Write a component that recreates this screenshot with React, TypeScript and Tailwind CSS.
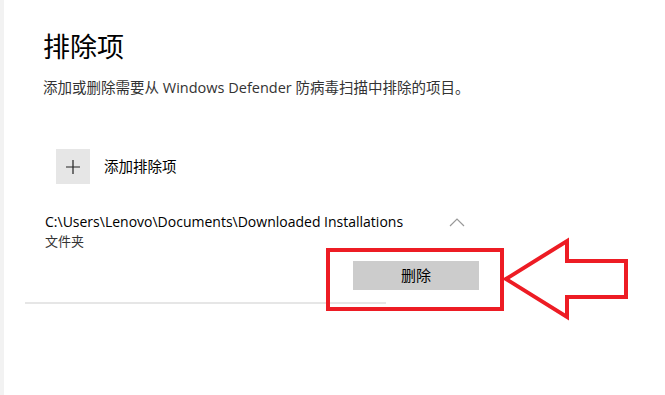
import React from "react"

const font = { fontFamily: '"Open Sans", "Noto Sans CJK SC", sans-serif' }

const Annotation = () => (
  <svg
    className="absolute -left-[4px] top-0 pointer-events-none"
    width="665"
    height="395"
    viewBox="0 0 665 395"
  >
    <rect x="328" y="250" width="174" height="59" fill="none" stroke="#ed1c24" strokeWidth="4" />
    <path
      d="M506 279 L567 241 L567 261 L626 261 L626 297 L567 297 L567 317 Z"
      fill="none"
      stroke="#ed1c24"
      strokeWidth="4"
      strokeLinejoin="miter"
    />
  </svg>
)

const App = () => {
  return (
    <div
      className="relative w-[665px] h-[395px] bg-white border-l-4 border-[#f2f2f2] overflow-hidden"
      style={font}
    >
      <div className="flex flex-col pl-[39px] pt-[28px]">
        <h1 className="text-[27px] leading-[38px] text-black font-normal">排除项</h1>
        <p className="mt-[12px] text-[14.5px] leading-[20px] text-[#333]">
          添加或删除需要从 Windows Defender 防病毒扫描中排除的项目。
        </p>

        <div className="mt-[51px] ml-[13px] flex items-center gap-[14px]">
          <div className="w-[34px] h-[35px] bg-[#e6e6e6] flex items-center justify-center">
            <svg width="16" height="16" viewBox="0 0 16 16">
              <path d="M8 1 V15 M1 8 H15" stroke="#222" strokeWidth="1.2" />
            </svg>
          </div>
          <span className="text-[14.5px] text-black">添加排除项</span>
        </div>

        <div className="mt-[28px] ml-[2px] w-[420px] flex justify-between items-start">
          <div className="flex flex-col">
            <span className="text-[14px] leading-[20px] text-black">
              C:\Users\Lenovo\Documents\Downloaded Installations
            </span>
            <span className="text-[13px] leading-[18px] text-[#333]">文件夹</span>
          </div>
          <svg width="16" height="9" viewBox="0 0 16 9" className="mt-[6px]">
            <path d="M1 8 L8 1 L15 8" fill="none" stroke="#999" strokeWidth="1.2" />
          </svg>
        </div>

        <div className="mt-[11px] w-[436px] flex justify-end">
          <button className="w-[126px] h-[29px] bg-[#cccccc] text-[15px] text-black">删除</button>
        </div>

        <div className="mt-[12px] -ml-[18px] w-[361px] h-[2px] bg-[#e6e6e6]" />
      </div>
      <Annotation />
    </div>
  )
}

export default App
